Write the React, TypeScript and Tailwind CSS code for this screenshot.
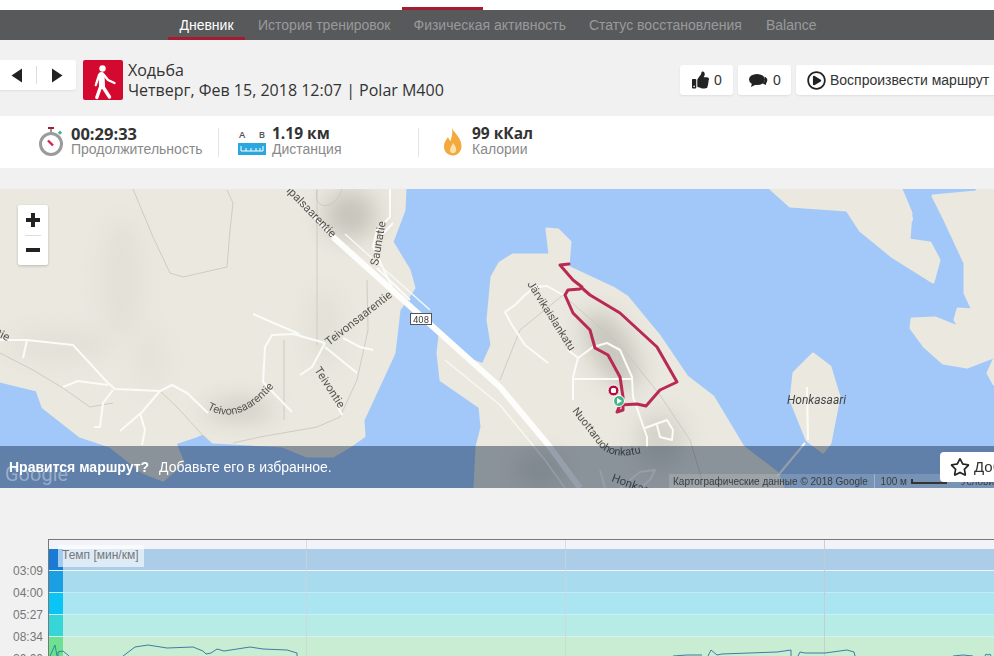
import { FaThumbsUp, FaRegPlayCircle, FaRegStar } from "react-icons/fa";

const arial = "font-['Liberation_Sans',Arial,sans-serif]";
const open = "font-['Open_Sans',sans-serif]";

const roads = [
  "M0 340 L27 340 L73 345 L108 383 L115 389 L160 391 L172 385 L187 393 L208 413",
  "M27 340 L23 358",
  "M63 387 L78 381 L108 385",
  "M113 390 L103 403 L100 427 L94 427",
  "M160 391 L142 412 L120 431",
  "M140 413 L145 430 L142 445",
  "M263 383 L265 347 L272 335 L293 334 L325 343",
  "M263 382 L292 412",
  "M253 314 L297 333 L302 337",
  "M325 343 L312 367 L300 375",
  "M325 347 L357 373",
  "M343 338 L360 347 L373 350",
  "M338 407 L342 415",
  "M390 189 L390 217 L377 230 L373 247 L392 287",
  "M393 223 L380 237",
  "M377 268 L410 300",
  "M548 363 L525 345 L512 325 L505 312 L515 305 L525 295 L535 287 L547 286 L563 295",
  "M568 350 L578 358",
  "M573 400 L573 377 L578 358 L593 347 L607 343 L620 350 L632 377 L633 397 L647 437 L647 447",
  "M573 379 L632 379",
  "M645 428 L667 420 L673 430 L672 440 L660 437 L657 425",
  "M807 387 L808 440",
  "M805 443 L780 473 L777 476",
  "M620 488 L640 472 L655 470 L650 480 L640 488",
  "M600 470 L605 488",
];

const grayLines = [
  "M133 189 L153 237 L170 273 L183 277 L227 267 L230 230 L233 203 L227 190",
  "M317 189 L317 345",
  "M367 280 L368 330 L357 380 L340 417 L317 427 L260 437 L233 443",
  "M0 353 L33 370 L63 388 L90 407 L113 403",
  "M160 391 L177 407 L207 440",
  "M500 380 L520 330 L563 295",
  "M563 295 L620 345 L660 395 L690 440 L702 480",
  "M284 340 L284 420",
  "M317 190 C 312 210 335 212 342 189",
];

const land = "#eae8df";

function MapDrawing() {
  return (
    <svg viewBox="0 189 994 299" className="block w-full h-full">
      <defs>
        <filter id="soft" x="-60%" y="-60%" width="220%" height="220%">
          <feGaussianBlur stdDeviation="11" />
        </filter>
        <filter id="jpeg" x="-2%" y="-2%" width="104%" height="104%">
          <feGaussianBlur stdDeviation="0.55" />
        </filter>
        <path id="lowerT" d="M207 409 Q240 428 276 384" />
        <path id="nuotta" d="M572 411 L600 447 Q616 464 660 447" />
        <path id="jarvi" d="M527 284 L575 360" />
      </defs>
      <rect x="0" y="189" width="994" height="299" fill="#a1c8f9" />
      <g filter="url(#jpeg)">
        <g fill={land} stroke={land} strokeWidth="3" strokeLinejoin="round">
          <path d="M0 189 L405 189 L404 210 L392 242 L409 270 L414 288 L399 310 L394 353 L363 420 L364 436 L350 446 L333 456 L307 456 L283 446 L213 442 L203 433 L193 437 L175 443 L183 463 L163 480 L143 472 L110 446 L80 436 L43 407 L37 390 L0 381 Z" />
          <path d="M438 353 L441 380 L480 407 L482 427 L477 447 L475 488 L783 488 L777 473 L743 447 L713 397 L687 377 L660 337 L627 297 L613 288 L568 267 L570 242 L558 230 L547 229 L550 255 L513 255 L500 263 L492 277 L488 320 L492 345 L483 365 L470 360 L440 335 Z" />
          <path d="M771 189 L790 206 L847 210 L860 230 L893 257 L933 282 L939 260 L930 243 L909 240 L911 213 L901 189 Z" />
          <path d="M978 189 L976 192 L933 196 L945 220 L965 263 L965 293 L973 310 L958 309 L955 320 L960 328 L935 318 L912 319 L911 328 L925 347 L943 363 L967 367 L993 357 L994 189 Z" />
          <path d="M994 360 L988 373 L994 384 Z" />
          <path d="M813 354 L794 373 L791 400 L807 440 L823 452 L830 443 L839 397 L830 367 Z" />
        </g>
        <ellipse cx="911" cy="219" rx="2" ry="3" fill={land} />
        <g filter="url(#soft)" opacity="0.55">
          <ellipse cx="350" cy="215" rx="26" ry="24" fill="#a9a89f" />
          <ellipse cx="122" cy="280" rx="20" ry="60" fill="#dcdbd1" />
          <ellipse cx="325" cy="330" rx="14" ry="40" fill="#dad9cf" />
          <ellipse cx="240" cy="410" rx="34" ry="9" fill="#b0afa6" />
          <ellipse cx="60" cy="345" rx="50" ry="14" fill="#dad9cf" />
          <ellipse cx="150" cy="360" rx="14" ry="30" fill="#dfded4" />
          <ellipse cx="612" cy="350" rx="20" ry="44" fill="#abaaa1" transform="rotate(-30 612 350)" />
          <ellipse cx="660" cy="440" rx="24" ry="28" fill="#c2c1b8" />
          <ellipse cx="540" cy="470" rx="26" ry="16" fill="#c2c1b8" />
        </g>
        <g fill="none" stroke="#c6c5bc" strokeWidth="0.8">
          {grayLines.map((d) => (
            <path key={d} d={d} />
          ))}
        </g>
        <g fill="none" stroke="#fbfbf8" strokeWidth="2" strokeLinejoin="round">
          {roads.map((d) => (
            <path key={d} d={d} />
          ))}
        </g>
        <path d="M333 237 L500 387 L550 447 L580 488" fill="none" stroke="#fdfdfb" strokeWidth="6" />
        <path d="M300 202 L333 237" fill="none" stroke="#fdfdfb" strokeWidth="2.5" />
        <path d="M345 234 L430 310 M445 360 L500 405 L545 460 L565 488" fill="none" stroke="#f8f8f4" strokeWidth="1.5" />
        <path
          d="M569 264 L560 265 L573 280 L582 287 L580 289 L568 290 L565 295 L573 313 L590 330 L595 348 L608 355 L620 377 L623 397 L623 410 L617 412 L620 405 L637 404 L646 406 L660 390 L677 382 L657 347 L620 313 L590 295 L582 288"
          fill="none"
          stroke="#b92a52"
          strokeWidth="3"
          strokeLinejoin="round"
          strokeLinecap="round"
        />
      </g>

      <g fontFamily="Roboto, sans-serif" fontSize="11.5" fill="#55554f">
        <text transform="translate(286 191) rotate(46)">ipalsaarentie</text>
        <text transform="translate(378 266) rotate(-80)">Saunatie</text>
        <text transform="translate(329 346) rotate(-38)">Teivonsaarentie</text>
        <text transform="translate(314 370) rotate(57)">Teivontie</text>
        <text transform="translate(-4 336) rotate(25)">tie</text>
        <text fontSize="11">
          <textPath href="#lowerT">Teivonsaarentie</textPath>
        </text>
        <text fontSize="11">
          <textPath href="#jarvi">Järvikaislankatu</textPath>
        </text>
        <text fontSize="11">
          <textPath href="#nuotta">Nuottaruohonkatu</textPath>
        </text>
        <text transform="translate(611 481) rotate(20)">Honkasaarentie</text>
        <text x="787" y="404" fontStyle="italic" fontSize="12" fill="#444">
          Honkasaari
        </text>
      </g>

      <rect x="410.5" y="313.5" width="21" height="11" fill="#fff" stroke="#555" strokeWidth="1" />
      <text x="421" y="322.5" textAnchor="middle" fontFamily="Roboto, sans-serif" fontSize="9.5" fill="#444">
        408
      </text>

      <circle cx="613.5" cy="390.5" r="5.5" fill="#b30f3c" stroke="#fff" strokeWidth="1" />
      <rect x="611" y="388" width="5" height="5" rx="1.5" fill="#fff" />
      <circle cx="619" cy="401" r="5.5" fill="#45b58a" stroke="#fff" strokeWidth="1" />
      <path d="M617 398 L622 401 L617 404 Z" fill="#fff" />
    </svg>
  );
}

function ChartBands() {
  const bands = [
    ["h-[22px] bg-[#abcde8]", "bg-[#1a7bd6]", "03:09"],
    ["h-[22px] bg-[#a9dbee]", "bg-[#1a9fe2]", "04:00"],
    ["h-[22px] bg-[#a9e6f2]", "bg-[#0ac4f6]", "05:27"],
    ["h-[22px] bg-[#b7ebe6]", "bg-[#36d6d8]", "08:34"],
    ["h-[22px] bg-[#c8edd2]", "bg-[#6fe092]", "20:00"],
  ];
  return (
    <div className="flex h-[117px]">
      <div className={`w-[48px] pt-[21px] flex flex-col ${arial} text-[12px] text-[#777] text-right pr-[5px] shrink-0`}>
        {bands.map((b) => (
          <div key={b[2]} className="h-[22px] leading-[22px] shrink-0">
            {b[2]}
          </div>
        ))}
      </div>
      <div className="relative flex-1 border-l border-t border-[#777] bg-[#f1f3f8] pt-[9px]">
        <div className="flex flex-col">
          {bands.map((b, i) => (
            <div key={b[2]} className={`flex shrink-0 ${b[0]} ${i === 0 ? "border-b border-white/80" : i < 4 ? "border-b border-white/40" : ""}`}>
              <div className={`w-[14px] ${b[1]}`} />
            </div>
          ))}
        </div>
        <div className="absolute top-0 left-[257px] w-px h-full bg-[#cfd3d6]/70" />
        <div className="absolute top-0 left-[516px] w-px h-full bg-[#cfd3d6]/70" />
        <div className="absolute top-0 left-[775px] w-px h-full bg-[#c9c9cf]/90" />
        <div className={`absolute left-[9px] top-[5px] w-[86px] h-[22px] bg-white/60 ${arial} text-[12px] leading-[20px] text-[#777] pl-[4px] whitespace-nowrap`}>
          Темп [мин/км]
        </div>
        <svg viewBox="49 540 945 116" className="absolute left-0 top-0 w-[945px] h-[116px]">
          <g fill="none" stroke="#2f6f9f" strokeWidth="0.9">
            <path stroke="#1f8a8a" d="M50 656 L55 645 L57 656" />
            <path d="M58 656 L58 652 L63 651 L69 656" />
            <path d="M123 656 L135 647 L148 645 L167 648 L193 647 L203 651 L206 654 L211 653 L217 649 L224 651 L250 647 L263 649 L287 650 L297 653 L297 656" />
            <path d="M673 656 L687 655 L702 655" />
            <path d="M708 656 L711 650 L717 655 L722 654 L777 652 L791 650 L791 656" />
            <path d="M798 656 L800 652 L805 653 L825 653 L847 650 L854 652 L855 656" />
            <path d="M953 656 L963 655 L973 656" />
            <path d="M985 656 L986 654 L988 655 L990 654 L991 656" />
          </g>
        </svg>
      </div>
    </div>
  );
}

const card = "h-[30px] bg-white rounded-[3px] shadow-[0_1px_2px_rgba(0,0,0,0.08)] flex items-center";

export default function App() {
  return (
    <div className={`w-[994px] h-[656px] overflow-hidden bg-[#f1f1f1] ${arial}`}>
      <div className="h-[10px] bg-white flex items-end pl-[402px]">
        <div className="w-[81px] h-[3px] bg-[#a51c30]" />
      </div>

      <nav className="h-[30px] bg-[#58595b] flex pl-[168px] text-[14px] text-[#98999b]">
        <div className="w-[77px] h-full flex items-center justify-center text-white border-b-[3px] border-[#a51c30] pt-[3px]">
          Дневник
        </div>
        <div className="ml-[13px] flex items-center">История тренировок</div>
        <div className="ml-[23px] flex items-center">Физическая активность</div>
        <div className="ml-[23px] flex items-center">Статус восстановления</div>
        <div className="ml-[24px] flex items-center">Balance</div>
      </nav>

      <header className="h-[76px] flex pt-[20px] relative">
        <div className={`w-[76px] ${card} rounded-l-none pl-[11px]`}>
          <svg width="12" height="15" viewBox="0 0 12 15">
            <path d="M11 0.5 V14.5 L0.5 7.5 Z" fill="#222" />
          </svg>
          <div className="ml-[13px] w-px h-[18px] bg-[#ddd]" />
          <svg width="12" height="15" viewBox="0 0 12 15" className="ml-[14px]">
            <path d="M1 0.5 V14.5 L11.5 7.5 Z" fill="#222" />
          </svg>
        </div>
        <div className="ml-[7px] w-[40px] h-[40px] bg-[#d3092f] rounded-[2px]">
          <svg width="40" height="40" viewBox="0 0 40 40" fill="none" stroke="#fff" strokeLinecap="round" strokeLinejoin="round">
            <circle cx="19.5" cy="8.5" r="3.2" fill="#fff" stroke="none" />
            <path d="M18.5 15 L19 26" strokeWidth="6" />
            <path d="M16 15 L12.8 25" strokeWidth="2.4" />
            <path d="M21 15 L25 20 L31.5 23" strokeWidth="2.4" />
            <path d="M17.5 27 L13.8 37.5" strokeWidth="3.4" />
            <path d="M20 27 L26.5 37" strokeWidth="3.4" />
          </svg>
        </div>
        <div className={`ml-[5px] ${open} text-[16px] leading-[20px] text-[#333]`}>
          <div>Ходьба</div>
          <div className="whitespace-nowrap">Четверг, Фев 15, 2018 12:07 | Polar M400</div>
        </div>
        <div className="absolute left-[680px] top-[25px] flex gap-[5px] text-[14px] text-[#333]">
          <div className={`w-[53px] ${card} pl-[12px] gap-[5px]`}>
            <FaThumbsUp className="text-[#222] w-[17px] h-[18px]" />
            <span>0</span>
          </div>
          <div className={`w-[53px] ${card} pl-[11px] gap-[5px]`}>
            <svg width="19" height="14" viewBox="0 0 19 14" fill="#222">
              <ellipse cx="8" cy="6.5" rx="8" ry="5.5" />
              <path d="M3 10 L2 14 L8 11 Z" />
              <path d="M15.5 3.5 C18 4.5 19 6.5 18 8.5 C17.5 9.5 17 10 17 12 L13.5 10.5 C15.5 9 16.8 6.5 15.5 3.5 Z" />
            </svg>
            <span>0</span>
          </div>
          <div className={`w-[203px] ${card} pl-[11px] gap-[4px] whitespace-nowrap`}>
            <FaRegPlayCircle className="text-[#222] w-[19px] h-[19px]" />
            <span>Воспроизвести маршрут</span>
          </div>
        </div>
      </header>

      <section className="h-[52px] bg-white flex items-center">
        <div className="w-[219px] h-[29px] flex items-center pl-[39px] border-r border-[#e4e4e4]">
          <svg width="25" height="30" viewBox="0 0 25 30" className="-mt-[1px]">
            <rect x="9" y="0" width="6" height="2" fill="#a51c30" />
            <rect x="11" y="2" width="2" height="4" fill="#999" />
            <rect x="20" y="4" width="3" height="3" fill="#3cb598" transform="rotate(45 21 5)" />
            <circle cx="12" cy="17" r="10.5" fill="#fff" stroke="#9b9b9b" strokeWidth="3" />
            <path d="M9 13.5 L14 18.5" stroke="#d3264d" strokeWidth="2.4" />
          </svg>
          <div className="ml-[7px] -mt-[2px]">
            <div className={`${open} font-bold text-[16.5px] leading-[17px] text-[#333]`}>00:29:33</div>
            <div className="text-[14px] leading-[15px] text-[#8a8a8a] whitespace-nowrap">Продолжительность</div>
          </div>
        </div>
        <div className="w-[200px] h-[29px] flex items-center pl-[19px] border-r border-[#e4e4e4]">
          <div className="w-[28px] shrink-0">
            <div className={`flex justify-between px-[1px] ${open} font-semibold text-[9.5px] leading-[12px] text-[#555]`}>
              <span>A</span>
              <span>B</span>
            </div>
            <svg width="28" height="13" viewBox="0 0 28 13" className="mt-[2px] block">
              <rect width="28" height="12" fill="#2aa7dc" />
              <path d="M3 3 V8 H25 V3 M8 8 V5 M13 8 V5 M18 8 V5 M22 8 V5" fill="none" stroke="#fff" strokeWidth="1" />
            </svg>
          </div>
          <div className="ml-[6px] -mt-[2px]">
            <div className={`${open} font-bold text-[15.5px] leading-[17px] text-[#333] whitespace-nowrap`}>1.19 км</div>
            <div className="text-[14px] leading-[15px] text-[#8a8a8a]">Дистанция</div>
          </div>
        </div>
        <div className="flex items-center pl-[24px]">
          <svg width="20" height="28" viewBox="0 0 20 28">
            <path
              d="M9 0 C11 5 19 10 18.5 19 C18 25 13 27.5 10 27.5 C5 27.5 1 24 1 18.5 C1 14 3.5 11.5 5 9 C6 11 6.5 12.5 7.5 13 C8.5 9 10 5 9 0 Z"
              fill="#f4a93c"
            />
            <path d="M10 15 C12 18 14 20 13 23 C12 26 8 26 7 23 C6.5 21 8.5 18.5 10 15 Z" fill="#fbe0b0" />
          </svg>
          <div className="ml-[9px] -mt-[2px]">
            <div className={`${open} font-bold text-[15.5px] leading-[17px] text-[#333] whitespace-nowrap`}>99 кКал</div>
            <div className="text-[14px] leading-[15px] text-[#8a8a8a]">Калории</div>
          </div>
        </div>
      </section>

      <div className="h-[21px]" />

      <section className="relative h-[299px] overflow-hidden">
        <MapDrawing />
        <div className="absolute left-[18px] top-[16px] w-[30px] h-[60px] bg-white rounded-[2px] shadow-[0_1px_3px_rgba(0,0,0,0.2)] flex flex-col items-center">
          <svg width="14" height="14" viewBox="0 0 14 14" className="mt-[8px]">
            <path d="M5 0 H9 V5 H14 V9 H9 V14 H5 V9 H0 V5 H5 Z" fill="#222" />
          </svg>
          <div className="w-[16px] h-px bg-[#ddd] mt-[8px]" />
          <div className="w-[14px] h-[4px] bg-[#222] mt-[12px]" />
        </div>
        <div className="absolute left-0 right-0 bottom-0 h-[42px] bg-[rgba(8,28,60,0.42)] flex items-center pl-[9px] text-[14px] text-white whitespace-nowrap">
          <div className="absolute left-[5px] top-[16px] text-[20px] leading-[24px] text-white/35 font-['Roboto',sans-serif]">Google</div>
          <span className="relative font-bold">Нравится маршрут?</span>
          <span className="relative ml-[10px]">Добавьте его в избранное.</span>
          <div className="absolute left-[669px] right-0 bottom-0 h-[14px] bg-white/15 flex items-center text-[10px] text-[#3c3c3c] pl-[4px]">
            <span>Картографические данные © 2018 Google</span>
            <div className="ml-[6px] w-px h-full bg-white/30" />
            <span className="ml-[6px]">100 м</span>
            <div className="ml-[4px] w-[44px] h-[5px] border-l-2 border-r-2 border-b-2 border-[#333]" />
            <span className="ml-[14px]">Услови</span>
          </div>
          <div className="absolute left-[940px] top-[6px] w-[80px] h-[30px] bg-white rounded-[4px] flex items-center pl-[10px] text-[#333] overflow-hidden">
            <FaRegStar className="w-[20px] h-[20px] text-[#222] shrink-0" />
            <span className="ml-[4px] text-[15px]">Добавить</span>
          </div>
        </div>
      </section>

      <div className="h-[51px]" />
      <ChartBands />
    </div>
  );
}
